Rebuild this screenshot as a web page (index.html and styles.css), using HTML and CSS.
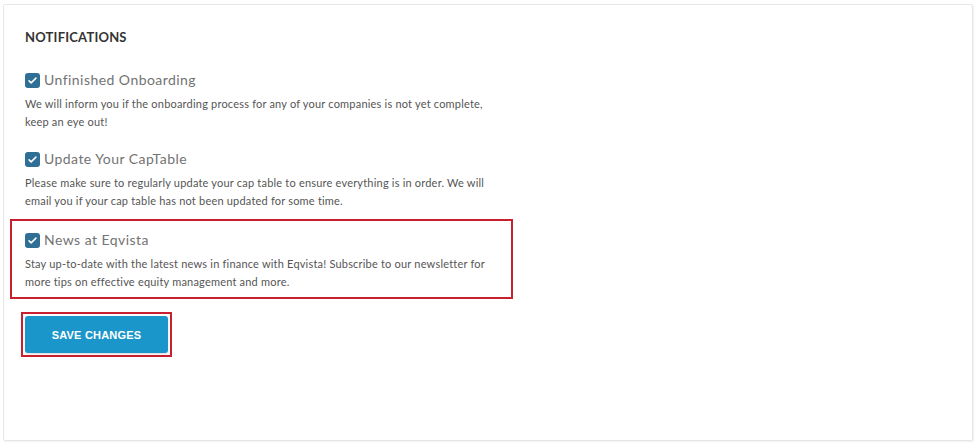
FILE: index.html
```html
<!DOCTYPE html>
<html lang="en">
<head>
  <meta charset="UTF-8">
  <meta name="viewport" content="width=device-width, initial-scale=1.0">
  <title>Notifications</title>
  <link rel="stylesheet" href="styles.css">
</head>
<body>
  <div class="card">
    <h3 class="card-title">NOTIFICATIONS</h3>

    <div class="notify">
      <label class="notify-label">
        <span class="check"><svg viewBox="0 0 16 16" width="11" height="11"><path d="M3 8.5l3 3 7-7" fill="none" stroke="#fff" stroke-width="2.2" stroke-linecap="round" stroke-linejoin="round"/></svg></span>
        Unfinished Onboarding
      </label>
      <p class="notify-text">We will inform you if the onboarding process for any of your companies is not yet complete,<br>keep an eye out!</p>
    </div>

    <div class="notify">
      <label class="notify-label">
        <span class="check"><svg viewBox="0 0 16 16" width="11" height="11"><path d="M3 8.5l3 3 7-7" fill="none" stroke="#fff" stroke-width="2.2" stroke-linecap="round" stroke-linejoin="round"/></svg></span>
        Update Your CapTable
      </label>
      <p class="notify-text">Please make sure to regularly update your cap table to ensure everything is in order. We will<br>email you if your cap table has not been updated for some time.</p>
    </div>

    <div class="notify notify-marked">
      <label class="notify-label">
        <span class="check"><svg viewBox="0 0 16 16" width="11" height="11"><path d="M3 8.5l3 3 7-7" fill="none" stroke="#fff" stroke-width="2.2" stroke-linecap="round" stroke-linejoin="round"/></svg></span>
        News at Eqvista
      </label>
      <p class="notify-text">Stay up-to-date with the latest news in finance with Eqvista! Subscribe to our newsletter for<br>more tips on effective equity management and more.</p>
    </div>

    <div class="save-mark">
      <button class="btn-save">SAVE CHANGES</button>
    </div>
  </div>
</body>
</html>
```

FILE: styles.css
```css
html,
body {
  margin: 0;
  padding: 0;
}

body {
  background: #fff;
  font-family: Lato, "Open Sans", sans-serif;
  color: #555;
  padding: 4px 6px 6px 3px;
}

.card {
  height: 437px;
  box-sizing: border-box;
  border: 1px solid #e6e6e6;
  border-radius: 2px;
  box-shadow: 1px 1px 2px rgba(0, 0, 0, 0.06);
  padding: 24px 21px 0;
}

.card-title {
  margin: 0 0 27px;
  font-size: 13px;
  font-weight: 700;
  color: #333;
  letter-spacing: 0.2px;
  line-height: 16px;
}

.notify {
  margin-bottom: 20px;
  width: 490px;
}

.notify-label {
  display: flex;
  align-items: center;
  gap: 4px;
  font-size: 14px;
  color: #737373;
  line-height: 16px;
  letter-spacing: 0.45px;
}

.check {
  width: 15px;
  height: 15px;
  border-radius: 3px;
  background: #2f6f95;
  display: inline-flex;
  align-items: center;
  justify-content: center;
}

.notify-text {
  margin: 7px 0 0;
  font-size: 11px;
  line-height: 18px;
  letter-spacing: 0.2px;
  color: #555;
}

.notify-marked {
  width: 473px;
  margin: -11px 0 13px -15px;
  padding: 11px 13px 6px;
  border: 2px solid #c8202f;
}

.save-mark {
  display: inline-block;
  margin-left: -4px;
  border: 2px solid #c8202f;
  padding: 2px;
}

.btn-save {
  display: block;
  width: 143px;
  height: 37px;
  border: 0;
  border-radius: 3px;
  background: #1b96cb;
  color: #fff;
  font-family: "Liberation Sans", Arial, sans-serif;
  font-size: 11px;
  font-weight: 700;
  letter-spacing: 0.2px;
  box-shadow: 0 1px 2px rgba(0, 0, 0, 0.15);
}
```
